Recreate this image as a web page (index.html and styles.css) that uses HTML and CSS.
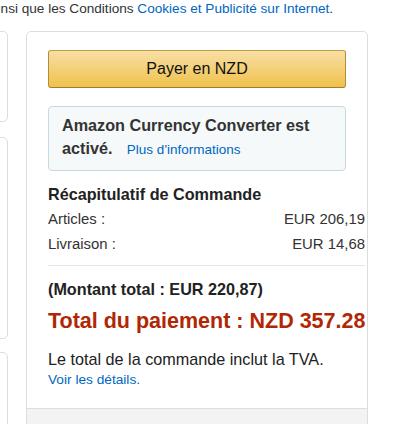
FILE: index.html
```html
<!DOCTYPE html>
<html lang="fr">
<head>
    <meta charset="UTF-8">
    <meta name="viewport" content="width=device-width, initial-scale=1.0">
    <title>Paiement</title>
    <link rel="stylesheet" href="styles.css">
</head>
<body>
    <p class="legal">ainsi que les Conditions <a href="#">Cookies et Publicité sur Internet</a>.</p>
    <div class="page">
        <div class="side">
            <div class="side-box box-one"></div>
            <div class="side-box box-two"></div>
            <div class="side-box box-three"></div>
        </div>
        <div class="card">
            <div class="card-body">
                <button class="pay-button">Payer en NZD</button>
                <div class="info-box">
                    <span class="info-title">Amazon Currency Converter est activé.</span>
                    <a href="#" class="info-link">Plus d'informations</a>
                </div>
                <div class="summary">
                    <h3 class="summary-title">Récapitulatif de Commande</h3>
                    <div class="summary-row">
                        <span>Articles :</span>
                        <span>EUR 206,19</span>
                    </div>
                    <div class="summary-row">
                        <span>Livraison :</span>
                        <span>EUR 14,68</span>
                    </div>
                    <hr class="divider">
                    <p class="amount">(Montant total : EUR 220,87)</p>
                    <p class="grand-total">Total du paiement : NZD 357.28</p>
                </div>
                <p class="vat">Le total de la commande inclut la TVA.</p>
                <a href="#" class="details">Voir les détails.</a>
            </div>
            <div class="card-foot"></div>
        </div>
    </div>
</body>
</html>
```

FILE: styles.css
```css
body {
    font-family: 'Liberation Sans', Arial, sans-serif;
    background-color: #fff;
    color: #222;
    margin: 0;
    overflow: hidden;
}

a {
    color: #0066c0;
    text-decoration: none;
}

.legal {
    margin: 0 0 0 -10px;
    font-size: 13.6px;
    line-height: 17px;
    color: #333;
    white-space: nowrap;
}

.page {
    display: flex;
    align-items: flex-start;
    gap: 18px;
    margin-top: 14px;
}

.side {
    display: flex;
    flex-direction: column;
    width: 108px;
    margin-left: -100px;
    flex-shrink: 0;
}

.side-box {
    border: 1px solid #ddd;
    border-radius: 5px;
    box-sizing: border-box;
}

.box-one {
    height: 91px;
}

.box-two {
    height: 202px;
    margin-top: 15px;
}

.box-three {
    height: 100px;
    margin-top: 13px;
}

.card {
    width: 342px;
    flex-shrink: 0;
    box-sizing: border-box;
    border: 1px solid #ddd;
    border-radius: 5px;
    overflow: hidden;
}

.card-body {
    padding: 18px 21px 18px 21px;
}

.pay-button {
    display: block;
    width: 100%;
    height: 38px;
    box-sizing: border-box;
    font-family: inherit;
    font-size: 16px;
    color: #111;
    background: linear-gradient(to bottom, #f7dfa5, #f0c14b);
    border: 1px solid #a88734;
    border-color: #c29b3a #b48d35 #9c7e31;
    border-radius: 3px;
    cursor: pointer;
}

.info-box {
    margin-top: 18px;
    padding: 7px 13px 9px;
    background-color: #f5f9fa;
    border: 1px solid #c6d9dc;
    border-radius: 4px;
    line-height: 22px;
}

.info-title {
    font-size: 16.2px;
    font-weight: bold;
    color: #333;
    margin-right: 10px;
}

.info-link {
    font-size: 13.5px;
}

.summary {
    margin-right: -19px;
}

.summary-title {
    margin: 12px 0 2px;
    font-size: 16.2px;
    line-height: 22px;
    color: #222;
}

.summary-row {
    display: flex;
    justify-content: space-between;
    font-size: 14.9px;
    line-height: 19px;
    padding: 3px 0;
    color: #333;
}

.divider {
    border: none;
    border-top: 1px solid #e3e3e3;
    margin: 8px 0 0;
}

.amount {
    margin: 12px 0 0;
    font-size: 16.2px;
    font-weight: bold;
    line-height: 22px;
    color: #222;
}

.grand-total {
    margin: 7px 0 0;
    font-size: 21.5px;
    font-weight: bold;
    line-height: 28px;
    color: #b12704;
    white-space: nowrap;
}

.vat {
    margin: 13px 0 0;
    font-size: 16.2px;
    line-height: 22px;
    color: #222;
}

.details {
    display: block;
    font-size: 13.7px;
    line-height: 20px;
}

.card-foot {
    height: 40px;
    background-color: #f3f3f3;
    border-top: 1px solid #ddd;
}
```
